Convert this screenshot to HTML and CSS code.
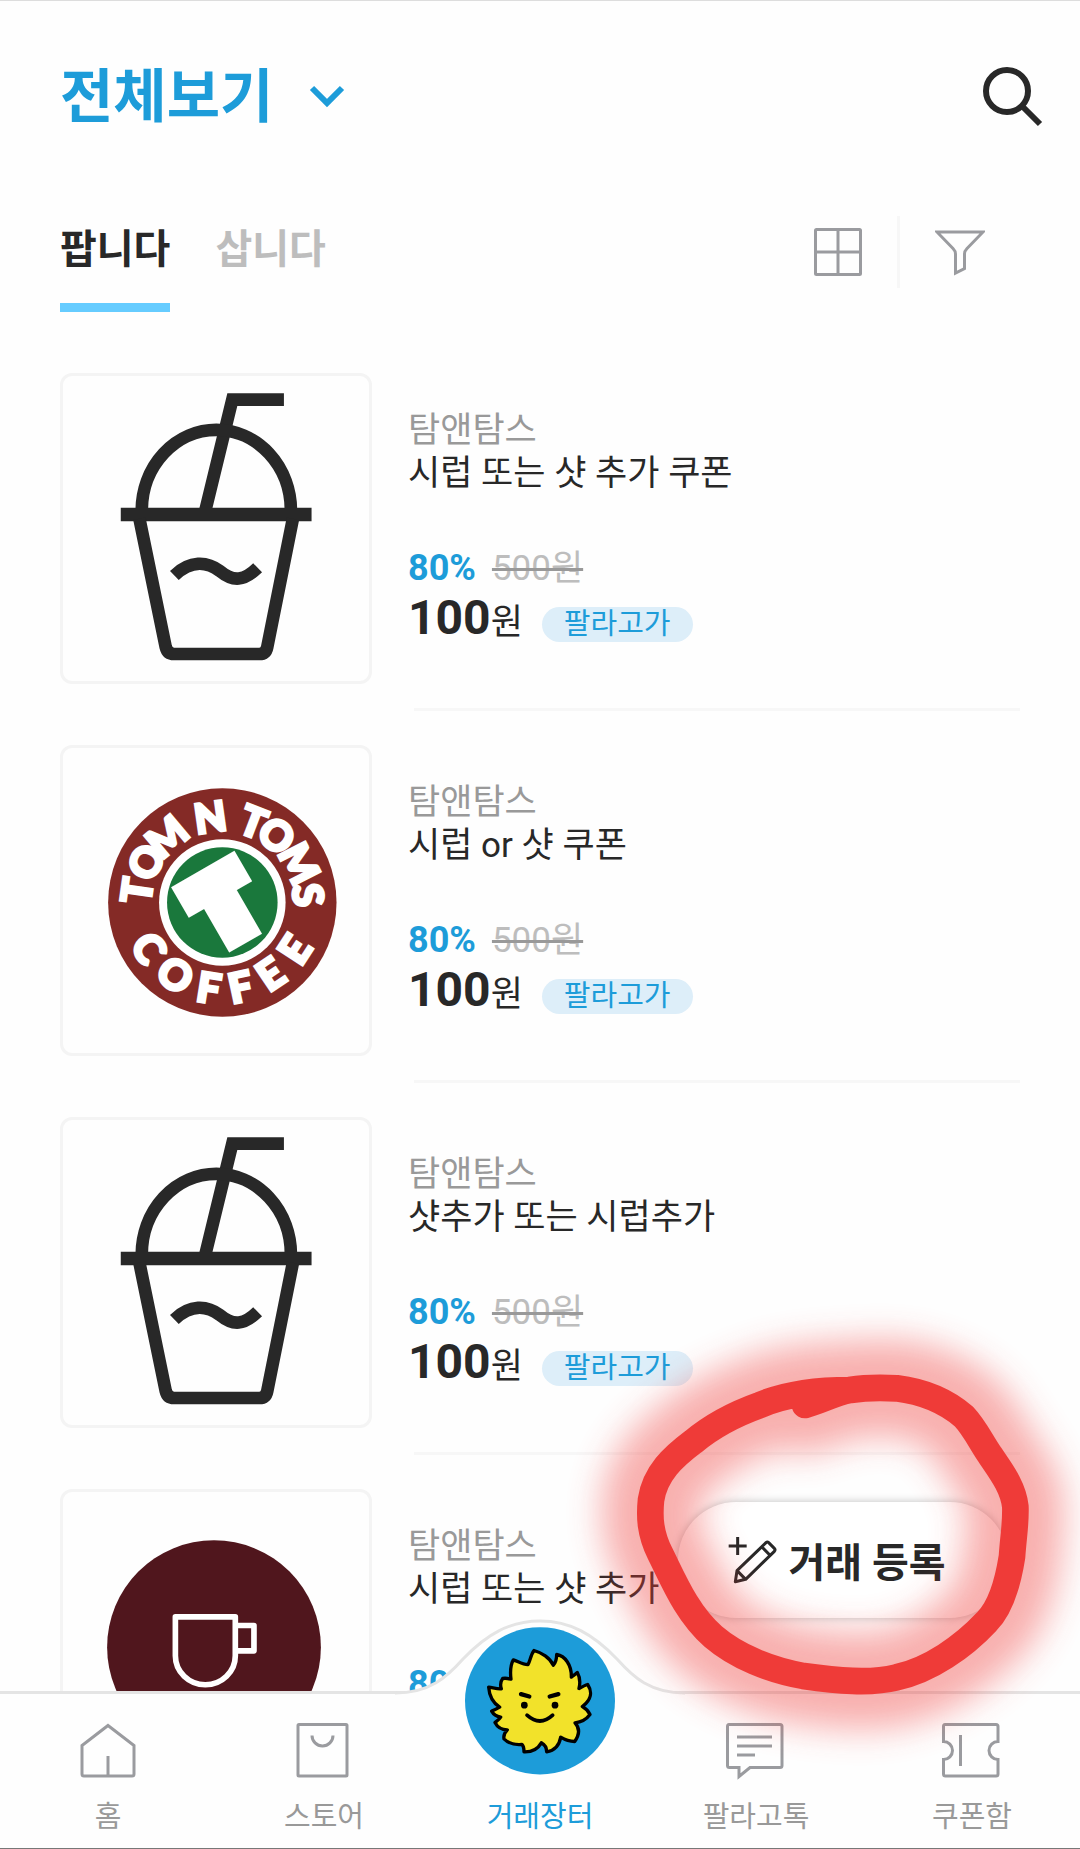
FILE: index.html
```html
<!DOCTYPE html>
<html lang="ko">
<head>
    <meta charset="UTF-8">
    <meta name="viewport" content="width=device-width, initial-scale=1.0">
    <title>거래장터</title>
    <link rel="stylesheet" href="styles.css">
</head>
<body>
    <!-- shared drawings -->
    <svg class="defs" aria-hidden="true">
        <symbol id="iced-cup" viewBox="70 76 916 916">
            <g fill="none" stroke="#282828" stroke-width="38">
                <path d="M732 147H577L496 480"/>
                <path d="M305 480A224 242 0 0 1 753 480"/>
                <path d="M242 492H815" stroke-width="40"/>
                <path d="M298 505L377 890Q382 911 402 911H658Q678 911 682 890L759 505"/>
                <path d="M403 675C450 630 500 632 540 662C580 695 612 692 653 652"/>
            </g>
        </symbol>
    </svg>

    <div class="app">
        <header class="top">
            <label class="category">
                <select aria-label="카테고리">
                    <option>전체보기</option>
                </select>
                <svg width="36" height="24" viewBox="0 0 36 24"><path d="M3 3L18 18L33 3" fill="none" stroke="#1d9cd9" stroke-width="6"/></svg>
            </label>
            <button class="icon-btn" type="button" aria-label="검색">
                <svg width="60" height="60" viewBox="0 0 60 60" fill="none" stroke="#282828" stroke-width="6"><circle cx="24" cy="24" r="21"/><path d="M39 39L57 57"/></svg>
            </button>
        </header>

        <div class="toolbar">
            <div class="tabs">
                <button class="tab active" type="button">팝니다</button>
                <button class="tab" type="button">삽니다</button>
            </div>
            <div class="tools">
                <button class="icon-btn" type="button" aria-label="격자 보기">
                    <svg width="48" height="48" viewBox="0 0 48 48" fill="none" stroke="#9a9b9f" stroke-width="3"><rect x="1.5" y="1.5" width="45" height="45" rx="1"/><path d="M24 2V46M2 24H46"/></svg>
                </button>
                <span class="bar"></span>
                <button class="icon-btn" type="button" aria-label="필터">
                    <svg width="50" height="48" viewBox="0 0 50 48" fill="none" stroke="#9a9b9f" stroke-width="3"><path d="M2 4H48L32 20.500Q29.500 23 29.500 26V40.500L20.500 45V26Q20.500 23 18 20.500Z"/></svg>
                </button>
            </div>
        </div>

        <main>
            <ul class="list">
                <li>
                    <a class="item" href="#">
                        <span class="thumb"><svg><use href="#iced-cup"/></svg></span>
                        <span class="info">
                            <span class="brand">탐앤탐스</span>
                            <span class="name">시럽 또는 샷 추가 쿠폰</span>
                            <span class="rate"><b>80%</b><del>500원</del></span>
                            <span class="price"><b>100</b>원<em>팔라고가</em></span>
                        </span>
                    </a>
                </li>
                <li>
                    <a class="item" href="#">
                        <span class="thumb">
                            <svg viewBox="70 51 916 916">
                                <circle cx="547" cy="515" r="343" fill="#842a26"/>
                                <circle cx="547" cy="515" r="190" fill="#fff"/>
                                <circle cx="547" cy="515" r="166" fill="#1a783c"/>
                                <g class="ring">
                                    <text x="547" y="301" transform="rotate(-82 547 515)">T</text>
                                    <text x="547" y="301" transform="rotate(-62 547 515)">O</text>
                                    <text x="547" y="301" transform="rotate(-40 547 515)">M</text>
                                    <text x="547" y="301" transform="rotate(-8 547 515)">N</text>
                                    <text x="547" y="301" transform="rotate(21 547 515)">T</text>
                                    <text x="547" y="301" transform="rotate(39 547 515)">O</text>
                                    <text x="547" y="301" transform="rotate(63 547 515)">M</text>
                                    <text x="547" y="301" transform="rotate(85 547 515)">S</text>
                                    <text x="547" y="819" transform="rotate(58 547 515)">C</text>
                                    <text x="547" y="819" transform="rotate(33 547 515)">O</text>
                                    <text x="547" y="819" transform="rotate(9 547 515)">F</text>
                                    <text x="547" y="819" transform="rotate(-12 547 515)">F</text>
                                    <text x="547" y="819" transform="rotate(-34 547 515)">E</text>
                                    <text x="547" y="819" transform="rotate(-57 547 515)">E</text>
                                </g>
                                <text class="mark" y="90" transform="translate(553 526) rotate(-30)">T</text>
                            </svg>
                        </span>
                        <span class="info">
                            <span class="brand">탐앤탐스</span>
                            <span class="name">시럽 or 샷 쿠폰</span>
                            <span class="rate"><b>80%</b><del>500원</del></span>
                            <span class="price"><b>100</b>원<em>팔라고가</em></span>
                        </span>
                    </a>
                </li>
                <li>
                    <a class="item" href="#">
                        <span class="thumb"><svg><use href="#iced-cup"/></svg></span>
                        <span class="info">
                            <span class="brand">탐앤탐스</span>
                            <span class="name">샷추가 또는 시럽추가</span>
                            <span class="rate"><b>80%</b><del>500원</del></span>
                            <span class="price"><b>100</b>원<em>팔라고가</em></span>
                        </span>
                    </a>
                </li>
                <li>
                    <a class="item" href="#">
                        <span class="thumb">
                            <svg viewBox="70 66 916 916">
                                <circle cx="522" cy="532" r="321" fill="#50161d"/>
                                <path d="M406 441H586V558A90 87 0 0 1 406 558ZM590 467H642V543H590" fill="none" stroke="#fff" stroke-width="17" stroke-linejoin="round"/>
                            </svg>
                        </span>
                        <span class="info">
                            <span class="brand">탐앤탐스</span>
                            <span class="name">시럽 또는 샷 추가 쿠폰</span>
                            <span class="rate"><b>80%</b><del>500원</del></span>
                            <span class="price"><b>100</b>원<em>팔라고가</em></span>
                        </span>
                    </a>
                </li>
            </ul>
        </main>

        <button class="write" type="button">
            <svg width="50" height="48" viewBox="0 0 150 144" fill="none" stroke="#282828" stroke-width="9" stroke-linejoin="round"><path d="M2 30H56M29 3V57"/><path d="M22 137L27 104L114 20Q118 16 122 20L139 37Q143 41 139 46L53 130ZM27 104L53 130M102 33L126 58"/></svg>
            거래 등록
        </button>

        <nav class="tabbar">
            <svg class="bump" width="290" height="76" viewBox="0 0 290 76">
                <path d="M0 76V74C35 74 52 58 68 40C92 15 115 2 145 2C175 2 198 15 222 40C238 58 255 74 290 74V76Z" fill="#fefefe"/>
                <path d="M0 74C35 74 52 58 68 40C92 15 115 2 145 2C175 2 198 15 222 40C238 58 255 74 290 74" fill="none" stroke="#e4e4e4" stroke-width="3"/>
            </svg>
            <a href="#">
                <svg width="60" height="60" viewBox="0 0 60 60"><path d="M30 5.500L56 25.500V54Q56 56 54 56H6Q4 56 4 54V25.500ZM30 36V56"/></svg>
                홈
            </a>
            <a href="#">
                <svg width="60" height="60" viewBox="0 0 60 60"><rect x="4" y="4.500" width="49" height="51.500" rx="1"/><path d="M18 15.500A10.500 10.500 0 0 0 39 15.500"/></svg>
                스토어
            </a>
            <a class="current" href="#">
                <svg width="150" height="148" viewBox="195 112 450 443">
                    <ellipse cx="420" cy="333" rx="225" ry="221" fill="#1d9cd9"/>
                    <path d="M402 182C425 188 450 205 460 226C470 215 470 200 470 194C495 198 515 225 514 262C522 256 528 252 532 248C540 262 542 275 537 296C548 290 556 286 563 284C577 305 575 330 547 350C558 356 565 364 570 374C558 390 545 397 525 399C540 415 538 435 524 455C510 455 495 450 482 442C478 465 465 482 440 486C440 474 435 465 424 459C415 475 400 487 372 486C372 475 370 468 366 464C345 466 325 460 312 447C310 437 315 427 322 420C305 420 292 412 285 398C290 394 297 390 302 382C290 380 280 373 275 364C285 360 292 356 299 352C280 340 268 320 266 292C280 294 292 298 304 297C300 285 303 273 308 266C318 264 325 266 333 268C330 245 332 225 340 210C355 215 370 225 384 224C390 215 392 195 402 182Z" fill="#f2e22a" stroke="#000" stroke-width="10" stroke-linejoin="round"/>
                    <path d="M363 313L388 320M449 320L475 313" stroke="#000" stroke-width="13" stroke-linecap="round"/>
                    <circle cx="373" cy="346" r="10"/>
                    <circle cx="465" cy="346" r="10"/>
                    <path d="M381 376Q420 411 458 376" fill="none" stroke="#000" stroke-width="11" stroke-linecap="round"/>
                </svg>
                거래장터
            </a>
            <a href="#">
                <svg width="60" height="60" viewBox="0 0 60 60"><path d="M3 4.500H54Q56 4.500 56 6.500V45.500Q56 47.500 54 47.500H24L13 56.500V47.500H3.500Q1.500 47.500 1.500 45.500V6.500Q1.500 4.500 3 4.500ZM11 17H46M11 26H46M11 35H29"/></svg>
                팔라고톡
            </a>
            <a href="#">
                <svg width="60" height="60" viewBox="0 0 60 60"><path d="M3 4.500H54Q56 4.500 56 6.500V21.500A9 9 0 0 0 56 39.500V54Q56 56 54 56H3.500Q1.500 56 1.500 54V39.500A9 9 0 0 0 1.500 21.500V6.500Q1.500 4.500 3 4.500ZM18.500 15V46"/></svg>
                쿠폰함
            </a>
        </nav>

        <!-- hand-drawn marker around the write button -->
        <svg class="marker" width="510" height="450" viewBox="0 0 1530 1350" aria-hidden="true">
            <defs>
                <filter id="glow" x="-40%" y="-40%" width="180%" height="180%"><feGaussianBlur stdDeviation="52"/></filter>
                <path id="loop" d="M705 315C745 305 790 280 840 270C890 262 930 262 980 265C1060 275 1130 305 1182 350C1215 385 1235 430 1260 465C1290 510 1330 560 1336 620C1338 670 1330 710 1326 770C1315 840 1295 920 1250 965C1180 1040 1080 1110 980 1132C900 1152 800 1142 700 1128C600 1110 500 1070 430 1010C350 940 310 840 270 760C240 700 238 650 243 600C255 520 310 470 370 425C430 375 500 340 570 315C640 285 720 270 840 270" fill="none" stroke="#ef3b38" stroke-linecap="round" stroke-linejoin="round"/>
            </defs>
            <use href="#loop" stroke-width="290" filter="url(#glow)" opacity="0.400"/>
            <use href="#loop" stroke-width="80"/>
        </svg>
    </div>
</body>
</html>
```
FILE: styles.css
```css
* {
    box-sizing: border-box;
}
body {
    margin: 0;
    background-color: #fefefe;
    color: #282828;
    font-family: Roboto, "Noto Sans CJK KR", sans-serif;
}
button, select {
    padding: 0;
    border: none;
    background: none;
    color: inherit;
    font: inherit;
    cursor: pointer;
}
a {
    color: inherit;
    text-decoration: none;
}
svg {
    display: block;
}
.defs {
    position: absolute;
    width: 0;
    height: 0;
}
.app {
    position: relative;
    display: flex;
    flex-direction: column;
    height: 100vh;
    overflow: hidden;
    border-top: 1px solid #ddd;
    border-bottom: 1px solid #777;
}

/* header */
.top {
    display: flex;
    justify-content: space-between;
    align-items: center;
    padding: 56px 37px 79px 60px;
}
.category {
    display: flex;
    align-items: center;
    gap: 35px;
}
.category select {
    appearance: none;
    height: 80px;
    color: #1d9cd9;
    font-size: 58px;
    font-weight: 700;
}
.toolbar {
    display: flex;
    justify-content: space-between;
    align-items: flex-start;
    padding: 0 95px 0 60px;
}
.tabs {
    display: flex;
    gap: 45px;
}
.tab {
    padding: 4px 0 23px;
    border-bottom: 9px solid transparent;
    color: #bdbdbd;
    font-size: 40px;
    font-weight: 700;
    line-height: 60px;
}
.tab.active {
    border-color: #6cf;
    color: #282828;
}
.tools {
    display: flex;
    align-items: center;
    gap: 35px;
}
.bar {
    width: 3px;
    height: 72px;
    background-color: #f7f7f7;
}

/* list */
main {
    flex: 1;
    min-height: 0;
    overflow: auto;
    scrollbar-width: none;
}
.list {
    margin: 0;
    padding: 61px 60px 0;
    list-style: none;
}
.list li::after {
    content: "";
    display: block;
    height: 3px;
    margin: 24px 0 34px 354px;
    background-color: #f7f7f7;
}
.item {
    display: flex;
    gap: 36px;
}
.thumb {
    width: 312px;
    height: 311px;
    border: 3px solid #f4f4f4;
    border-radius: 12px;
}
.thumb svg {
    width: 100%;
    height: 100%;
}
.ring, .mark {
    fill: #fff;
    stroke: #fff;
    font-family: Lato, sans-serif;
    font-weight: 900;
    text-anchor: middle;
}
.ring {
    stroke-width: 9px;
    font-size: 124px;
}
.mark {
    stroke-width: 76px;
    font-size: 250px;
}
.info {
    display: flex;
    flex-direction: column;
    padding-top: 36px;
    font-size: 35px;
    line-height: 43px;
}
.brand {
    color: #999;
}
.rate {
    display: flex;
    gap: 16px;
    margin-top: 52px;
}
.rate b {
    color: #1d9cd9;
    font-size: 36px;
}
.rate del {
    color: #bdbdbd;
    text-decoration-color: #999;
}
.price {
    display: flex;
    align-items: baseline;
    line-height: 56px;
}
.price b {
    font-size: 48px;
}
.price em {
    margin-left: 19px;
    padding: 0 22px;
    border-radius: 18px;
    background-color: #ddeef9;
    color: #1d9cd9;
    font-size: 29px;
    font-style: normal;
    line-height: 35px;
}

/* floating button */
.write {
    position: absolute;
    right: 72px;
    bottom: 230px;
    display: flex;
    justify-content: center;
    align-items: center;
    gap: 10px;
    width: 330px;
    height: 116px;
    padding: 0 12px 0 0;
    border-radius: 58px;
    background-color: #fff;
    box-shadow: 0 0 8px rgba(0, 0, 0, 0.25);
    font-size: 40px;
    font-weight: 700;
}

/* bottom navigation */
.tabbar {
    position: relative;
    display: flex;
    height: 157px;
    border-top: 3px solid #e4e4e4;
    background-color: #fefefe;
}
.bump {
    position: absolute;
    left: 50%;
    bottom: 153px;
    margin-left: -145px;
}
.tabbar a {
    position: relative;
    flex: 1;
    display: flex;
    flex-direction: column;
    align-items: center;
    gap: 17px;
    padding-top: 26px;
    color: #999;
    font-size: 29px;
    line-height: 40px;
}
.tabbar a svg {
    fill: none;
    stroke: #9a9b9f;
    stroke-width: 3px;
}
.tabbar a.current {
    color: #1d9cd9;
}
.tabbar a.current svg {
    margin: -93px 0 5px;
    fill: #000;
    stroke: none;
}

.marker {
    position: absolute;
    right: 0;
    bottom: 98px;
    overflow: visible;
    pointer-events: none;
}
```
